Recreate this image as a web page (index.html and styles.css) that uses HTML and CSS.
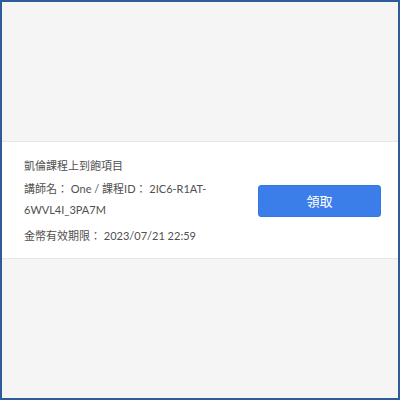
FILE: index.html
```html
<!DOCTYPE html>
<html lang="zh-Hant">
<head>
<meta charset="utf-8">
<link rel="stylesheet" href="styles.css">
</head>
<body>
<div class="frame">
  <div class="card">
    <div class="info">
      <div class="title">凱倫課程上到飽項目</div>
      <div class="line">講師名： One / 課程ID： 2IC6-R1AT-6WVL4I_3PA7M</div>
      <div class="line expire">金幣有效期限： 2023/07/21 22:59</div>
    </div>
    <button class="claim" type="button">領取</button>
  </div>
</div>
</body>
</html>
```
FILE: styles.css
```css
html, body {
  margin: 0;
  padding: 0;
}
body {
  font-family: Lato, "Noto Sans CJK TC", sans-serif;
  font-size: 11px;
  color: #505050;
}
.frame {
  box-sizing: border-box;
  width: 400px;
  height: 400px;
  border: 2px solid #2f5b9b;
  background: #f5f5f5;
  display: flex;
  align-items: center;
}
.card {
  width: 100%;
  background: #fff;
  border-top: 1px solid #e6e6e6;
  border-bottom: 1px solid #e6e6e6;
  padding: 13px 17px 12px 22px;
  box-sizing: border-box;
  display: flex;
  align-items: center;
}
.info {
  flex: 1;
  min-width: 0;
  margin-right: 12px;
}
.title {
  line-height: 21px;
  margin-bottom: 2px;
}
.line {
  line-height: 21px;
}
.expire {
  margin-top: 5px;
}
.claim {
  flex: none;
  width: 123px;
  height: 32px;
  background: #3b7de9;
  border: 1px solid #3576e2;
  border-radius: 3px;
  color: #fff;
  font-family: Lato, "Noto Sans CJK TC", sans-serif;
  font-size: 13px;
  padding: 0;
}
```
